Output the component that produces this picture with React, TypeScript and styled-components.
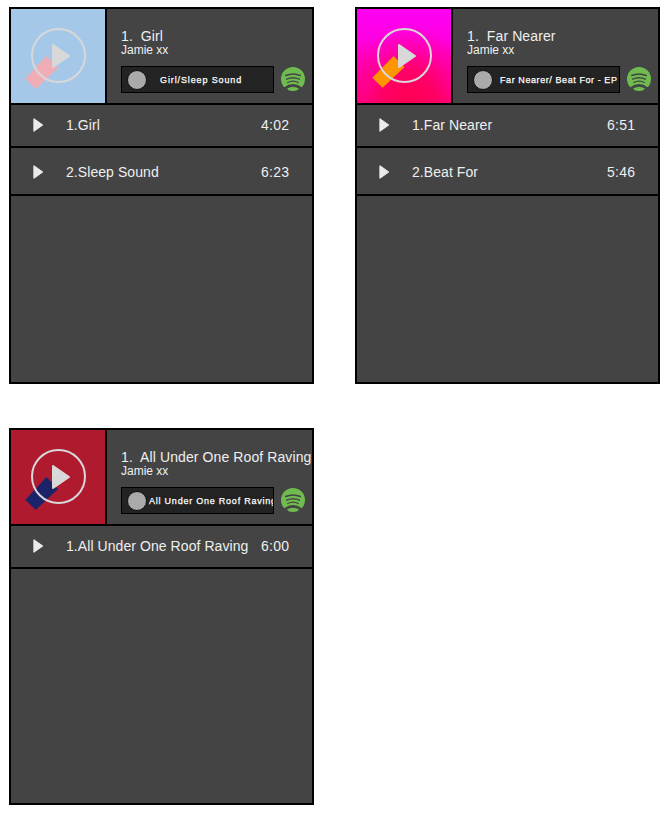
import React from "react";
import styled, { createGlobalStyle } from "styled-components";

const GlobalStyle = createGlobalStyle`
  body {
    margin: 0;
    background: #fff;
    font-family: "Liberation Sans", Arial, sans-serif;
  }
`;

const Page = styled.main`
  display: grid;
  grid-template-columns: 305px 305px;
  column-gap: 41px;
  row-gap: 44px;
  padding: 7px 0 0 9px;
`;

const Card = styled.article`
  box-sizing: border-box;
  width: 305px;
  height: 377px;
  border: 2px solid #000;
  background: #444;
  color: #efefef;
  overflow: hidden;
`;

const Header = styled.header`
  display: flex;
  height: 94px;
  border-bottom: 2px solid #000;
`;

const Artwork = styled.div<{ $background: string }>`
  flex: none;
  width: 94px;
  height: 94px;
  border-right: 2px solid #000;
  background: ${(p) => p.$background};

  svg {
    display: block;
  }
`;

const Info = styled.div`
  flex: 1;
  min-width: 0;
  padding: 19px 0 0 14px;
`;

const Title = styled.h2`
  margin: 0;
  font-size: 14px;
  font-weight: 400;
  line-height: 16px;
  letter-spacing: 0.1px;
  white-space: pre;
`;

const Artist = styled.p`
  margin: -1px 0 0;
  font-size: 12px;
  line-height: 14px;
`;

const Controls = styled.div`
  display: flex;
  align-items: flex-start;
  gap: 7px;
  margin-top: 9px;

  > svg {
    display: block;
    margin-top: 1px;
  }
`;

const AlbumBar = styled.div`
  box-sizing: border-box;
  display: flex;
  align-items: center;
  width: 153px;
  height: 27px;
  padding-left: 5px;
  border: 1px solid #000;
  background: #232323;
  overflow: hidden;
`;

const Knob = styled.span`
  box-sizing: border-box;
  flex: none;
  width: 20px;
  height: 20px;
  margin-top: 1px;
  border: 1px solid #111;
  border-radius: 50%;
  background: #aaa;
`;

const Album = styled.span<{ $indent: number; $tracking: number }>`
  flex: none;
  margin-left: ${(p) => p.$indent}px;
  padding-top: 2px;
  color: #fff;
  font-size: 9px;
  line-height: 11px;
  letter-spacing: ${(p) => p.$tracking}px;
  -webkit-text-stroke: 0.25px #fff;
  white-space: nowrap;
`;

const Track = styled.div`
  box-sizing: border-box;
  display: grid;
  grid-template-columns: 33px 195px auto;
  align-items: center;
  height: 43px;
  padding: 0 0 1px 22px;
  border-bottom: 2px solid #000;
  font-size: 14px;
  line-height: 16px;
  letter-spacing: 0.07px;
  white-space: nowrap;

  & + & {
    height: 48px;
    padding: 2px 0 0 22px;
  }

  svg {
    display: block;
  }
`;

const Time = styled.span`
  letter-spacing: 0.3px;
`;

const SpotifyIcon = () => (
  <svg width="24" height="24" viewBox="0 0 24 24">
    <circle cx="12" cy="12" r="12" fill="#6fbb50" />
    <g fill="none" stroke="#444" strokeLinecap="round">
      <path d="M4.7 8.5Q12 5.3 19.3 8.5" strokeWidth="1.5" />
      <path d="M5.6 12.2Q12 9.2 18.4 12.2" strokeWidth="1.4" />
      <path d="M6.7 15.5Q12 12.6 17.3 15.5" strokeWidth="1.2" />
      <path d="M4 21.2Q12 15.6 20 21.2" strokeWidth="2.6" />
    </g>
    <path d="M2 21.5H6.2L8 24H2ZM22 21.5H17.8L16 24H22Z" fill="#444" />
  </svg>
);

const PlayIcon = () => (
  <svg width="11" height="14" viewBox="0 0 11 14">
    <path d="M0.9 0.7L9.8 7L0.9 13.3Z" fill="#ebebeb" stroke="#ebebeb" strokeLinejoin="round" />
  </svg>
);

const ArtPlay = ({ accent, shape }: { accent: string; shape: string }) => (
  <svg width="94" height="94" viewBox="0 0 94 94">
    <path d={shape} fill={accent} />
    <circle cx="47.5" cy="46.5" r="26.5" fill="none" stroke="#d8d8d8" strokeWidth="2" />
    <path d="M42 36L58 47L42 58Z" fill="#d8d8d8" stroke="#d8d8d8" strokeWidth="2" strokeLinejoin="round" />
  </svg>
);

const WIDE_STRIPE = "M14.3 69.7L35.5 47L47 59L24.7 80Z";
const SLIM_STRIPE = "M15.3 68.7L36.6 47L47.5 58L25.6 78.8Z";

type Release = {
  title: string;
  album: string;
  indent: number;
  tracking: number;
  background: string;
  accent: string;
  stripe: string;
  tracks: [string, string][];
};

const releases: Release[] = [
  {
    title: "Girl",
    album: "Girl/Sleep Sound",
    indent: 13,
    tracking: 0.88,
    background: "#a5c8e9",
    accent: "#efadb5",
    stripe: WIDE_STRIPE,
    tracks: [["Girl", "4:02"], ["Sleep Sound", "6:23"]],
  },
  {
    title: "Far Nearer",
    album: "Far Nearer/ Beat For - EP",
    indent: 7,
    tracking: 0.58,
    background:
      "radial-gradient(ellipse 62px 80px at 55% 100%, #ff0055 0%, rgba(255,0,90,0.8) 40%, rgba(255,0,130,0.4) 70%, rgba(255,0,200,0) 100%), linear-gradient(#ff00f4 0%, #ff00e4 30%, #ff00a8 65%, #ff0078 100%)",
    accent: "#ff9600",
    stripe: SLIM_STRIPE,
    tracks: [["Far Nearer", "6:51"], ["Beat For", "5:46"]],
  },
  {
    title: "All Under One Roof Raving",
    album: "All Under One Roof Raving",
    indent: 2,
    tracking: 0.77,
    background: "#b01a2e",
    accent: "#1c2369",
    stripe: WIDE_STRIPE,
    tracks: [["All Under One Roof Raving", "6:00"]],
  },
];

export default function App() {
  return (
    <>
      <GlobalStyle />
      <Page>
        {releases.map((release) => (
          <Card key={release.title}>
            <Header>
              <Artwork $background={release.background}>
                <ArtPlay accent={release.accent} shape={release.stripe} />
              </Artwork>
              <Info>
                <Title>{`1.  ${release.title}`}</Title>
                <Artist>Jamie xx</Artist>
                <Controls>
                  <AlbumBar>
                    <Knob />
                    <Album $indent={release.indent} $tracking={release.tracking}>
                      {release.album}
                    </Album>
                  </AlbumBar>
                  <SpotifyIcon />
                </Controls>
              </Info>
            </Header>
            {release.tracks.map(([name, time], i) => (
              <Track key={name}>
                <PlayIcon />
                <span>{`${i + 1}.${name}`}</span>
                <Time>{time}</Time>
              </Track>
            ))}
          </Card>
        ))}
      </Page>
    </>
  );
}
